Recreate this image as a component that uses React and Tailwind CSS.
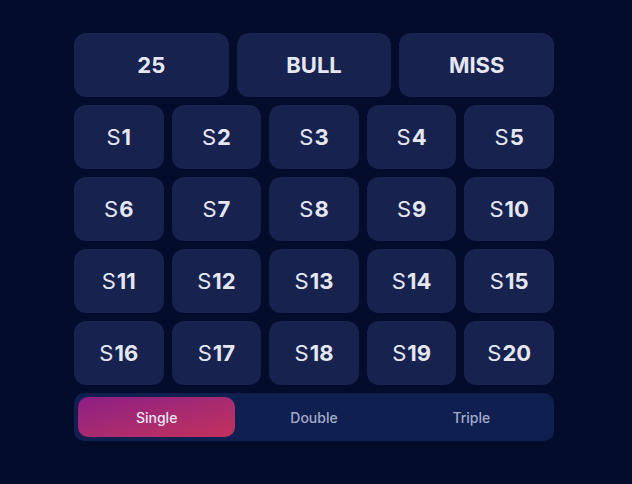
import React from "react";

const KEYS = Array.from({ length: 20 }, (_, i) => i + 1);

function Key({ n }) {
  return (
    <button className="h-16 rounded-xl bg-[#17224f] flex items-center justify-center text-[22px] text-[#e4e7f2] leading-none">
      <span className="font-normal mr-[1px]">S</span>
      <span className="font-bold">{n}</span>
    </button>
  );
}

export default function App() {
  return (
    <div
      className="w-[632px] h-[484px] bg-[#030c2a] pl-[74px] pt-[33px]"
      style={{ fontFamily: "Inter, 'Noto Sans', sans-serif" }}
    >
      <div className="w-[480px] flex flex-col gap-2">
        <div className="grid grid-cols-3 gap-2">
          {["25", "BULL", "MISS"].map((t) => (
            <button
              key={t}
              className="h-16 rounded-xl bg-[#17224f] flex items-center justify-center text-[22px] font-bold text-[#e4e7f2] leading-none"
            >
              {t}
            </button>
          ))}
        </div>
        <div className="grid grid-cols-5 gap-2">
          {KEYS.map((n) => (
            <Key key={n} n={n} />
          ))}
        </div>
        <div className="h-12 rounded-[10px] bg-[#0f1f50] p-1 grid grid-cols-3 text-[14px] font-medium">
          <button className="rounded-[10px] bg-gradient-to-br from-[#8c1c84] to-[#c4305a] text-[#ece4f2]">
            Single
          </button>
          <button className="text-[#a3abc8]">Double</button>
          <button className="text-[#a3abc8]">Triple</button>
        </div>
      </div>
    </div>
  );
}
